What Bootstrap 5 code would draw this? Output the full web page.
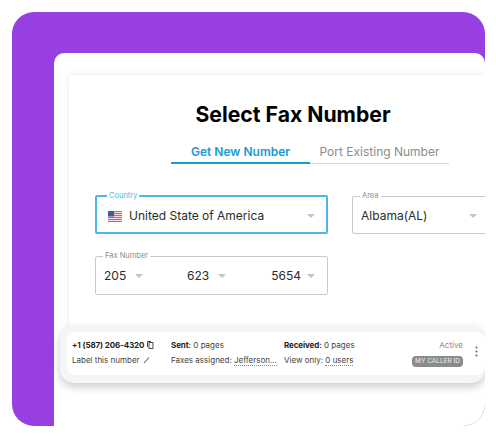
<!DOCTYPE html>
<html lang="en">
<head>
    <meta charset="UTF-8">
    <meta name="viewport" content="width=device-width, initial-scale=1.0">
    <title>Select Fax Number</title>
    <link href="https://cdn.jsdelivr.net/npm/bootstrap@5.3.0/dist/css/bootstrap.min.css" rel="stylesheet">
    <style>
        body {
            background: #fff;
            font-family: "Inter", "Liberation Sans", sans-serif;
            color: #222;
            overflow: hidden;
        }
        .stage {
            width: 473px;
            height: 414px;
            margin: 12px 0 0 12px;
            padding: 41px 0 0 42px;
            background: #973fe0;
            border-radius: 22px;
            overflow: hidden;
        }
        .panel {
            height: 373px;
            padding: 22px 0 0 15px;
            background: #fff;
            border-radius: 10px 10px 0 0;
        }
        .sheet {
            height: 290px;
            padding: 26px 0 0 26px;
            background: #fff;
            box-shadow: 0 0 7px rgba(0, 0, 0, .1);
        }
        .sheet-title {
            width: 396px;
            margin: 0 0 17px;
            font-size: 21.2px;
            font-weight: 700;
            line-height: 26px;
            color: #000;
            text-align: center;
        }
        .tab-row { margin-left: 76px; width: 278px; }
        .tab-item {
            width: 139px;
            padding: 0 0 3px;
            font-size: 12px;
            line-height: 15px;
            text-align: center;
            color: #8c8c8c;
            border-bottom: 1px solid #d6d6d6;
        }
        .tab-item.on {
            color: #1a9ad6;
            font-weight: 600;
            border-bottom: 2px solid #1a9ad6;
        }
        .field-row { margin-top: 28px; gap: 24px; width: 500px; }
        .field-row.fax-row { margin-top: 18px; }
        .field-box {
            width: 233px;
            height: 42px;
            margin: 0;
            padding: 0 8px;
            border: 1px solid #c9c9c9;
            border-radius: 2px;
        }
        .field-box.on { padding: 0 7px; border: 2px solid #4db8e8; }
        .field-box.wide { width: 160px; }
        .fax-row .field-box { height: 43px; }
        .field-box legend {
            float: none;
            width: auto;
            margin: 0 0 0 -1px;
            padding: 0 2px;
            font-size: 7.5px;
            line-height: 8px;
            color: #8c8c8c;
        }
        .field-box.on legend { margin-left: 3px; color: #4db8e8; }
        .field-val {
            height: 32px;
            font-size: 12px;
            color: #2b2b2b;
        }
        .area-val { width: 116px; }
        .caret-down {
            width: 0;
            height: 0;
            border-left: 4px solid transparent;
            border-right: 4px solid transparent;
            border-top: 4px solid #c4c4c4;
        }
        .us-flag { width: 14px; height: 11px; margin-right: 7px; border-radius: 1px; }
        .fax-part { width: 83px; gap: 9px; }
        .fax-part.tail { width: auto; gap: 6px; margin-left: auto; margin-right: 4px; }
        .number-wrap {
            width: 425px;
            height: 58px;
            margin: 30px 0 0 -35px;
            padding: 7px 0 8px 7px;
            background: #f5f5f5;
            border-radius: 14px;
            box-shadow: 0 4px 8px rgba(0, 0, 0, .2);
        }
        .number-row {
            height: 43px;
            background: #fff;
            border-radius: 8px;
            padding: 6px 0 0 5px;
            font-size: 8px;
            line-height: 15px;
            color: #444;
        }
        .num-a { width: 99px; }
        .num-b { width: 113px; }
        .num-c { width: 128px; }
        .num-d { width: 51px; text-align: right; color: #8c8c8c; }
        .num-e { margin-left: 12px; padding-top: 8px; }
        .num-strong { font-weight: 700; color: #222; letter-spacing: -.1px; }
        .dot-line { border-bottom: 1px dotted #888; }
        .caller-tag {
            display: block;
            height: 11px;
            margin-top: 3px;
            border-radius: 4px;
            background: #8b8b8b;
            color: #eee;
            font-size: 6.5px;
            line-height: 11px;
            text-align: center;
            white-space: nowrap;
        }
        .mini-icon { width: 7px; height: 8px; margin-left: 1px; vertical-align: -1px; }
        .kebab { display: block; width: 3px; height: 11px; }
    </style>
</head>
<body>
    <div class="stage">
        <div class="panel">
            <div class="sheet">
                <h1 class="sheet-title">Select Fax Number</h1>

                <!-- Tabs -->
                <div class="d-flex tab-row">
                    <div class="tab-item on">Get New Number</div>
                    <div class="tab-item">Port Existing Number</div>
                </div>

                <!-- Country and area -->
                <div class="d-flex field-row">
                    <fieldset class="field-box on">
                        <legend>Country</legend>
                        <div class="d-flex align-items-center field-val ps-1">
                            <svg class="us-flag" viewBox="0 0 14 11">
                                <rect width="14" height="11" fill="#f6dcdc"/>
                                <path d="M0 .5h14M0 2.5h14M0 4.5h14M0 6.5h14M0 8.5h14M0 10.5h14" stroke="#d4605f" stroke-width="1"/>
                                <rect width="6" height="5.5" fill="#3d5aa8"/>
                            </svg>
                            <span>United State of America</span>
                            <span class="caret-down ms-auto me-1"></span>
                        </div>
                    </fieldset>
                    <fieldset class="field-box wide">
                        <legend>Area</legend>
                        <div class="d-flex align-items-center field-val area-val">
                            <span>Albama(AL)</span>
                            <span class="caret-down ms-auto"></span>
                        </div>
                    </fieldset>
                </div>

                <!-- Fax number -->
                <div class="d-flex field-row fax-row">
                    <fieldset class="field-box">
                        <legend>Fax Number</legend>
                        <div class="d-flex align-items-center field-val">
                            <div class="d-flex align-items-center fax-part"><span>205</span><span class="caret-down"></span></div>
                            <div class="d-flex align-items-center fax-part"><span>623</span><span class="caret-down"></span></div>
                            <div class="d-flex align-items-center fax-part tail"><span>5654</span><span class="caret-down"></span></div>
                        </div>
                    </fieldset>
                </div>

                <!-- Number card -->
                <div class="number-wrap">
                    <div class="d-flex number-row">
                        <div class="num-a">
                            <div class="num-strong">+1 (587) 206-4320
                                <svg class="mini-icon" viewBox="0 0 7 8" fill="none" stroke="#333" stroke-width=".9"><path d="M2 1.5h4v6H2z"/><path d="M.5 6V.5h3.5"/></svg>
                            </div>
                            <div>Label this number
                                <svg class="mini-icon" viewBox="0 0 7 8" fill="none" stroke="#666" stroke-width="1.1"><path d="M1 7l5-5.5"/></svg>
                            </div>
                        </div>
                        <div class="num-b">
                            <div><span class="num-strong">Sent:</span> 0 pages</div>
                            <div>Faxes assigned: <span class="dot-line">Jefferson...</span></div>
                        </div>
                        <div class="num-c">
                            <div><span class="num-strong">Received:</span> 0 pages</div>
                            <div>View only: <span class="dot-line">0 users</span></div>
                        </div>
                        <div class="num-d">
                            <div>Active</div>
                            <span class="caller-tag">MY CALLER ID</span>
                        </div>
                        <div class="num-e">
                            <svg class="kebab" viewBox="0 0 3 11" fill="#666"><circle cx="1.5" cy="1.5" r="1"/><circle cx="1.5" cy="5.5" r="1"/><circle cx="1.5" cy="9.5" r="1"/></svg>
                        </div>
                    </div>
                </div>
            </div>
        </div>
    </div>

    <script src="https://cdn.jsdelivr.net/npm/bootstrap@5.3.0/dist/js/bootstrap.bundle.min.js"></script>
</body>
</html>
